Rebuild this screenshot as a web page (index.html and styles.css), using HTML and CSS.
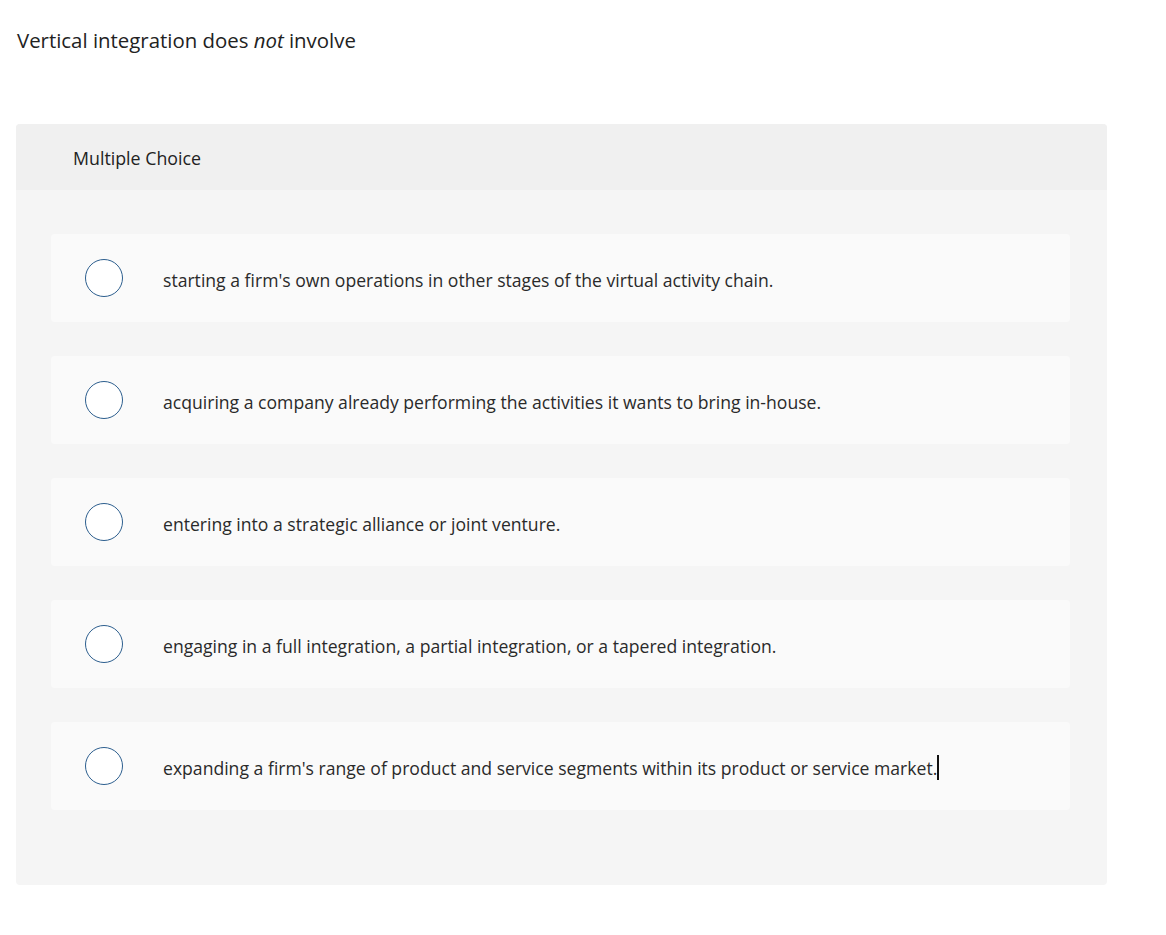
FILE: index.html
```html
<!DOCTYPE html>
<html>
<head>
<meta charset="utf-8">
<link rel="stylesheet" href="styles.css">
</head>
<body>
<div class="page">
  <p class="question">Vertical integration does <em>not</em> involve</p>
  <div class="panel">
    <div class="panel-head">Multiple Choice</div>
    <div class="panel-body">
      <div class="option"><span class="radio"></span><span class="label">starting a firm's own operations in other stages of the virtual activity chain.</span></div>
      <div class="option"><span class="radio"></span><span class="label">acquiring a company already performing the activities it wants to bring in-house.</span></div>
      <div class="option"><span class="radio"></span><span class="label">entering into a strategic alliance or joint venture.</span></div>
      <div class="option"><span class="radio"></span><span class="label">engaging in a full integration, a partial integration, or a tapered integration.</span></div>
      <div class="option"><span class="radio"></span><span class="label">expanding a firm's range of product and service segments within its product or service market.<span class="caret"></span></span></div>
    </div>
  </div>
</div>
</body>
</html>
```
FILE: styles.css
```css
html, body {
  margin: 0;
  padding: 0;
  background: #fff;
}
body {
  font-family: "Open Sans", "Lato", "Liberation Sans", sans-serif;
  color: #222;
}
.page {
  padding: 0 59px 0 16px;
}
.question {
  margin: 0;
  padding-top: 28px;
  padding-left: 1px;
  font-size: 20.4px;
  line-height: 24px;
  color: #222;
}
.question em {
  font-style: italic;
}
.panel {
  margin-top: 72px;
  width: 1091px;
  border-radius: 4px;
  background: #f5f5f5;
  overflow: hidden;
}
.panel-head {
  height: 66px;
  background: #f0f0f0;
  padding-left: 57px;
  display: flex;
  align-items: center;
  font-size: 17.8px;
  color: #222;
  box-sizing: border-box;
  padding-top: 1px;
}
.panel-body {
  padding: 44px 37px 75px 35px;
  display: flex;
  flex-direction: column;
  gap: 34px;
}
.option {
  height: 88px;
  background: #fafafa;
  border-radius: 4px;
  display: flex;
  align-items: center;
  padding-left: 34px;
  box-sizing: border-box;
}
.radio {
  width: 38px;
  height: 38px;
  box-sizing: border-box;
  border: 1.5px solid #2c5e8e;
  border-radius: 50%;
  background: #fff;
  flex: none;
}
.label {
  margin-left: 40px;
  padding-top: 3px;
  font-size: 17.6px;
  color: #2a2a2a;
  display: flex;
  align-items: center;
}
.caret {
  display: inline-block;
  width: 2px;
  height: 25px;
  background: #111;
  margin-left: 0;
}
```
